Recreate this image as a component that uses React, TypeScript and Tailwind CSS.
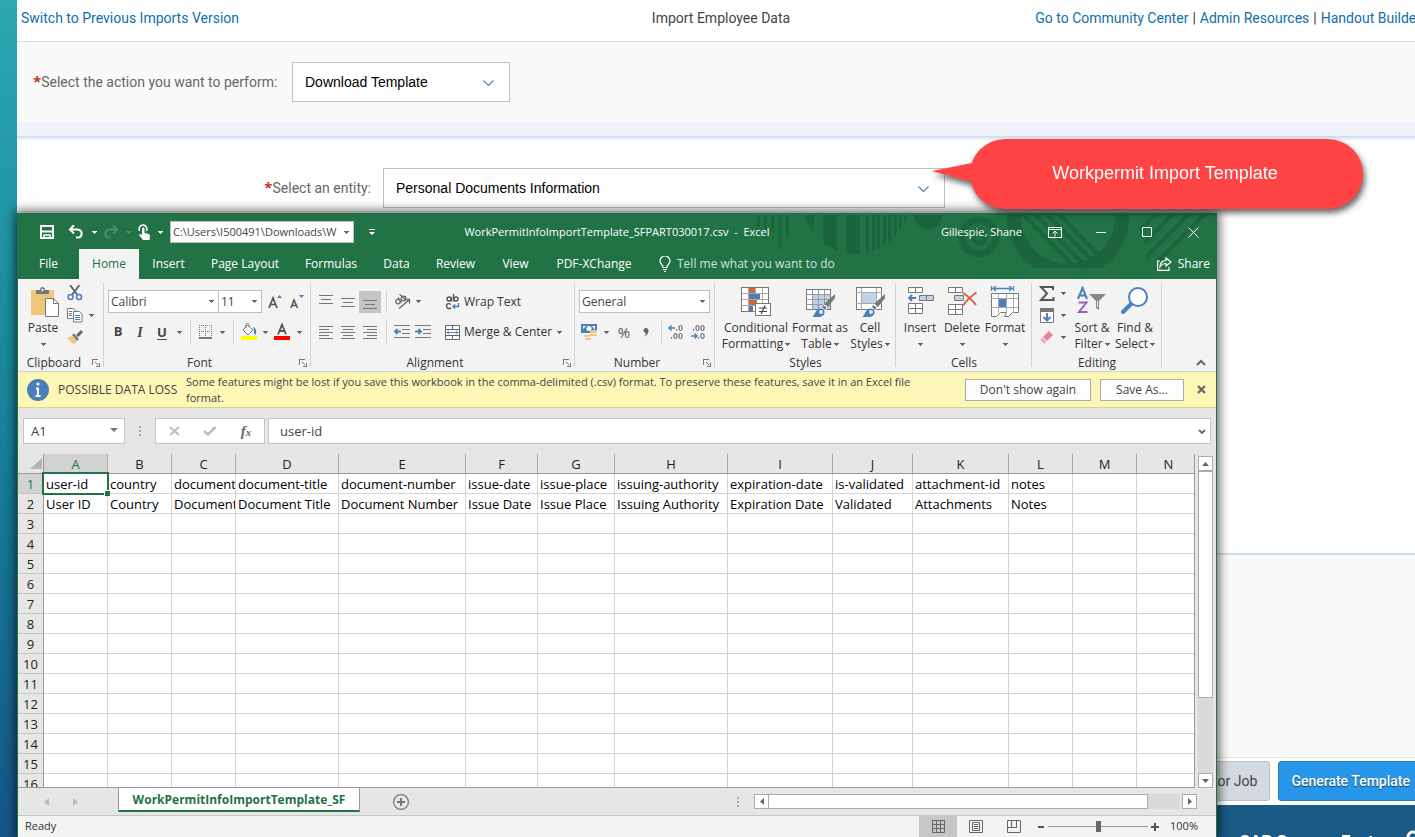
import { ReactNode, useState } from 'react'

type Column = { letter: string; width: string; name: string; label: string }

const COLUMNS: Column[] = [
  { letter: 'A', width: 'w-[64px]', name: 'user-id', label: 'User ID' },
  { letter: 'B', width: 'w-[64px]', name: 'country', label: 'Country' },
  { letter: 'C', width: 'w-[64px]', name: 'document-type', label: 'Document Type' },
  { letter: 'D', width: 'w-[103px]', name: 'document-title', label: 'Document Title' },
  { letter: 'E', width: 'w-[127px]', name: 'document-number', label: 'Document Number' },
  { letter: 'F', width: 'w-[72px]', name: 'issue-date', label: 'Issue Date' },
  { letter: 'G', width: 'w-[77px]', name: 'issue-place', label: 'Issue Place' },
  { letter: 'H', width: 'w-[113px]', name: 'issuing-authority', label: 'Issuing Authority' },
  { letter: 'I', width: 'w-[105px]', name: 'expiration-date', label: 'Expiration Date' },
  { letter: 'J', width: 'w-[80px]', name: 'is-validated', label: 'Validated' },
  { letter: 'K', width: 'w-[96px]', name: 'attachment-id', label: 'Attachments' },
  { letter: 'L', width: 'w-[64px]', name: 'notes', label: 'Notes' },
  { letter: 'M', width: 'w-[64px]', name: '', label: '' },
  { letter: 'N', width: 'w-[64px]', name: '', label: '' },
]

const ROWS = Array.from({ length: 16 }, (_, i) => i + 1)

const TABS = [
  { name: 'File', width: 'w-[61px]' },
  { name: 'Home', width: 'w-[60px]' },
  { name: 'Insert', width: 'w-[59px]' },
  { name: 'Page Layout', width: 'w-[94px]' },
  { name: 'Formulas', width: 'w-[78px]' },
  { name: 'Data', width: 'w-[53px]' },
  { name: 'Review', width: 'w-[65px]' },
  { name: 'View', width: 'w-[55px]' },
  { name: 'PDF-XChange', width: 'w-[102px]' },
]

/* ---------- small shared pieces ---------- */

function Caret({ className = 'text-[#666]' }: { className?: string }) {
  return (
    <svg width="5" height="3" viewBox="0 0 5 3" className={`shrink-0 ${className}`} shapeRendering="crispEdges">
      <path d="M0 0h5L2.500 3z" fill="currentColor" />
    </svg>
  )
}

function CaretButton({ label, className = 'text-[#666]' }: { label: string; className?: string }) {
  return (
    <button aria-label={label} className="flex h-[22px] w-3 items-center justify-center">
      <Caret className={className} />
    </button>
  )
}

function Tool({ label, className = 'w-[22px]', children }: { label: string; className?: string; children: ReactNode }) {
  return (
    <button aria-label={label} className={`flex h-[22px] shrink-0 items-center justify-center ${className}`}>
      {children}
    </button>
  )
}

function Rule() {
  return <div className="mx-[5px] h-[22px] w-px shrink-0 bg-[#d2d2d2]" />
}

function Combo({ label, value, className }: { label: string; value: string; className: string }) {
  return (
    <div className={`relative shrink-0 border border-[#c0c0c0] bg-white ${className}`}>
      <select aria-label={label} className="h-full w-full appearance-none overflow-hidden bg-transparent pr-3 pl-[2px] text-[#444] outline-none">
        <option>{value}</option>
      </select>
      <div className="pointer-events-none absolute inset-y-0 right-1 flex items-center">
        <Caret />
      </div>
    </div>
  )
}

function Group({ name, launcher = false, className, children }: { name: string; launcher?: boolean; className: string; children: ReactNode }) {
  return (
    <div className={`relative flex shrink-0 flex-col justify-between ${className}`}>
      <div className="flex h-[75px]">{children}</div>
      <div className="text-center text-[12px] leading-4 text-[#333]">{name}</div>
      {launcher && (
        <button aria-label={`${name} settings`} className="absolute right-1 bottom-1">
          <svg width="8" height="8" viewBox="0 0 8 8" fill="none" stroke="#777" shapeRendering="crispEdges">
            <path d="M.5 6V.5H6M3 3l3.500 3.500M7.500 4v3.500H4" />
          </svg>
        </button>
      )}
      <div className="absolute top-1 right-0 bottom-1 w-px bg-[#d2d2d2]" />
    </div>
  )
}

function BigButton({ icon, lines, className }: { icon: ReactNode; lines: string[]; className: string }) {
  return (
    <button className={`flex shrink-0 flex-col items-center pt-[7px] text-[12px] leading-4 whitespace-nowrap text-[#333] ${className}`}>
      {icon}
      <span className="mt-[2px]">{lines[0]}</span>
      <span className="flex h-4 items-center gap-[2px]">
        {lines[1]}
        <Caret />
      </span>
    </button>
  )
}

/* ---------- icons ---------- */

function PasteIcon() {
  return (
    <svg width="32" height="32" viewBox="0 0 32 32">
      <path d="M4 4h23v25H4z" fill="#edc77b" />
      <path d="M9 8V4h4c0-4 5-4 5 0h4v4z" fill="#777" />
      <circle cx="15.500" cy="4" r="1.200" fill="#f3f3f3" />
      <path d="M18.500 12.500h8l5 5v13h-13z" fill="#fff" stroke="#777" />
      <path d="M26.500 12.500v5h5" fill="none" stroke="#777" />
    </svg>
  )
}

function CutIcon() {
  return (
    <svg width="16" height="16" viewBox="0 0 16 16" fill="none">
      <path d="M3 0l7.500 10M12.500 0L5 10" stroke="#666" strokeWidth="2" />
      <circle cx="3.500" cy="12" r="2.500" stroke="#4a7fbb" strokeWidth="1.500" />
      <circle cx="12" cy="12" r="2.500" stroke="#4a7fbb" strokeWidth="1.500" />
    </svg>
  )
}

function CopyIcon() {
  return (
    <svg width="16" height="15" viewBox="0 0 16 15" fill="#fff" stroke="#777">
      <path d="M.5.5h6l2 2v8h-8z" />
      <path d="M2 3.500h3M2 5.500h3M2 7.500h3" stroke="#4a7fbb" />
      <path d="M6.500 3.500h6l2.500 2.500v8H6.500z" />
      <path d="M8 7.500h5M8 9.500h5M8 11.500h5" stroke="#4a7fbb" />
    </svg>
  )
}

function PainterIcon() {
  return (
    <svg width="16" height="15" viewBox="0 0 16 15">
      <path d="M0 8l5-2 5 5-3 4z" fill="#edc77b" />
      <path d="M5 5l2-1.500L12 9l-2 2z" fill="#777" />
      <path d="M9 5l5-5 2 2-4.500 5z" fill="#666" />
    </svg>
  )
}

function HLines({ rows }: { rows: [number, number, number][] }) {
  return (
    <svg width="14" height="14" viewBox="0 0 14 14" stroke="#777" shapeRendering="crispEdges">
      {rows.map(([x1, x2, y]) => (
        <path key={y} d={`M${x1} ${y + 0.5}H${x2}`} />
      ))}
    </svg>
  )
}

function IndentIcon({ out = false }: { out?: boolean }) {
  return (
    <svg width="16" height="14" viewBox="0 0 16 14" fill="none">
      <path d="M0 .5h16M8 4.500h8M8 8.500h8M0 12.500h16" stroke="#777" shapeRendering="crispEdges" />
      {out ? <path d="M7 6.500H1M3.500 4L1 6.500 3.500 9" stroke="#4a7fbb" strokeWidth="1.800" /> : <path d="M0 6.500h6M3.500 4L6 6.500 3.500 9" stroke="#4a7fbb" strokeWidth="1.800" />}
    </svg>
  )
}

function ConditionalIcon() {
  return (
    <svg width="32" height="32" viewBox="0 0 32 32">
      <rect x="1.500" y="1.500" width="27" height="24" fill="#fff" stroke="#777" />
      <path d="M8.500 2v23M15.500 2v23M22.500 2v23M2 7.500h26M2 13.500h26M2 19.500h26" stroke="#aaa" />
      <path d="M9 2h6v5H9zM9 14h8v5H9z" fill="#d9603b" />
      <path d="M9 8h11v5H9zM9 20h4v5H9z" fill="#4a7fbb" />
      <rect x="15.500" y="17.500" width="15" height="12" fill="#fff" stroke="#777" />
      <path d="M19 22h8M19 25.500h8M25 19.500l-4 8.500" stroke="#444" strokeWidth="1.200" />
    </svg>
  )
}

function Brush() {
  return (
    <>
      <path d="M31 8v4l-7 9-3.500-3.500z" fill="#777" />
      <path d="M19.500 18.500l3.500 3.500-2 2.500-3.500-3.500z" fill="#777" stroke="#f3f3f3" />
      <path d="M8 31c3-1 3-8 8-8.500 5 0 6 5 2.500 7.500-2.500 1.500-7 1-10.500 1z" fill="#4a7fbb" />
      <circle cx="17" cy="26" r="2" fill="#dce8f4" />
    </>
  )
}

function FormatTableIcon() {
  return (
    <svg width="32" height="32" viewBox="0 0 32 32">
      <rect x="2.500" y="3.500" width="24" height="20" fill="#fff" stroke="#777" />
      <path d="M9 9h17v14H9z" fill="#bdd3ea" />
      <path d="M8.500 4v20M14.500 4v20M20.500 4v20M2 8.500h25M2 13.500h25M2 18.500h25" stroke="#999" />
      <Brush />
    </svg>
  )
}

function CellStylesIcon() {
  return (
    <svg width="32" height="32" viewBox="0 0 32 32">
      <rect x="2.500" y="1.500" width="25" height="22" fill="#fff" stroke="#777" />
      <path d="M7.500 2v22M22.500 2v22M2 6.500h26M2 17.500h26" stroke="#aaa" />
      <path d="M8 7h14v10H8z" fill="#bdd3ea" />
      <Brush />
    </svg>
  )
}

function InsertCellsIcon() {
  return (
    <svg width="32" height="32" viewBox="0 0 32 32" fill="#fff" stroke="#777">
      <path d="M4.500 1.500h14v5h-14zM11.500 1.500v5M4.500 17.500h14v10h-14zM11.500 17.500v10M4.500 22.500h14" />
      <path d="M15.500 9.500h14v5h-14zM22.500 9.500v5" fill="#bdd3ea" />
      <path d="M12 12H5M8 9l-3 3 3 3" fill="none" stroke="#4a7fbb" strokeWidth="1.800" />
    </svg>
  )
}

function DeleteCellsIcon() {
  return (
    <svg width="32" height="32" viewBox="0 0 32 32" fill="#fff" stroke="#777">
      <path d="M2.500 1.500h14v5h-14zM9.500 1.500v5M2.500 18.500h14v10h-14zM9.500 18.500v10M2.500 23.500h14" />
      <path d="M8.500 9.500h9v5h-9z" fill="#bdd3ea" />
      <path d="M17 7c5 3 9 7 13 12M30.500 6.500C25 10 21 14 17 19.500" fill="none" stroke="#d9603b" strokeWidth="2" />
    </svg>
  )
}

function FormatCellsIcon() {
  return (
    <svg width="32" height="32" viewBox="0 0 32 32">
      <path d="M2.500 0v5M24.500 0v5M4 2.500h19M7 0L4 2.500 7 5M20 0l3 2.500L20 5" fill="none" stroke="#4a7fbb" strokeWidth="1.300" />
      <path d="M2.500 7.500h27v19h-6l-4 4h-4l2-4h-6l-4 4h-5z" fill="#fff" stroke="#777" />
      <path d="M9.500 8v19M17.500 8v19M24.500 8v19M2 12.500h27M2 21.500h27" stroke="#aaa" />
      <path d="M10 13h7v8h-7z" fill="#4a7fbb" />
    </svg>
  )
}

function SortFilterIcon() {
  return (
    <svg width="32" height="32" viewBox="0 0 32 32" fill="none">
      <path d="M2 13L6.500 2 11 13M3.500 9.500h6" stroke="#4a7fbb" strokeWidth="2" />
      <path d="M2.500 16.500h8L3 26h8.500" stroke="#9a62b8" strokeWidth="2" />
      <path d="M13 8h17l-7 7v9l-3-2v-7z" fill="#888" />
      <path d="M21.500 15v6" stroke="#eee" />
    </svg>
  )
}

function FindIcon() {
  return (
    <svg width="32" height="32" viewBox="0 0 32 32" fill="none">
      <path d="M12 18l-8 8" stroke="#4a7fbb" strokeWidth="4" strokeLinecap="round" />
      <circle cx="19" cy="11" r="9" fill="#fff" stroke="#4a7fbb" strokeWidth="2" />
    </svg>
  )
}

function ColorIcon({ color, children }: { color: string; children: ReactNode }) {
  return (
    <svg width="17" height="18" viewBox="0 0 17 18" fill="none">
      {children}
      <path d="M0 13h16v4H0z" fill={color} />
    </svg>
  )
}

function DecimalIcon({ increase = false }: { increase?: boolean }) {
  return (
    <svg width="16" height="16" viewBox="0 0 16 16" fill="none" stroke="#555">
      {increase ? (
        <>
          <path d="M7 4H1M3.500 1.500L1 4l2.500 2.500" stroke="#4a7fbb" strokeWidth="1.500" />
          <path d="M8.500 5v1.500M3.500 13v1.500" />
          <rect x="11" y="1.500" width="3" height="5" rx="1.500" />
          <rect x="6" y="9.500" width="3" height="5" rx="1.500" />
          <rect x="11" y="9.500" width="3" height="5" rx="1.500" />
        </>
      ) : (
        <>
          <path d="M1 12h6M4.500 9.500L7 12l-2.500 2.500" stroke="#4a7fbb" strokeWidth="1.500" />
          <path d="M3.500 5v1.500M8.500 13v1.500" />
          <rect x="6" y="1.500" width="3" height="5" rx="1.500" />
          <rect x="11" y="1.500" width="3" height="5" rx="1.500" />
          <rect x="11" y="9.500" width="3" height="5" rx="1.500" />
        </>
      )}
    </svg>
  )
}

// circuit-like artwork behind the title bar
function TitleArt() {
  return (
    <svg width="460" height="54" viewBox="0 0 460 54" className="pointer-events-none absolute top-px right-0" fill="none">
      <defs>
        <clipPath id="disc">
          <circle cx="100" cy="-14" r="53" />
        </clipPath>
        <clipPath id="ringBox">
          <rect x="240" y="0" width="140" height="53" />
        </clipPath>
        <clipPath id="ringInner">
          <circle cx="312" cy="2" r="52" />
        </clipPath>
      </defs>
      <g fill="#1c643c">
        <path d="M1 0h3v12H1zM8 0h3v24H8zM15 0h3v17h-3zM22 0h4v34h-4zM30 0h3v22h-3z" />
        <g clipPath="url(#disc)">
          <path d="M49 0h9v40h-9zM67 0h14v40H67zM90 0h14v40H90zM110 0h3v40h-3zM116 0h3v40h-3zM121 0h3v40h-3zM127 0h3v40h-3zM132 0h3v40h-3zM138 0h3v40h-3zM143 0h3v40h-3zM148 0h3v40h-3z" />
        </g>
        <circle cx="172" cy="0" r="14" />
      </g>
      <g stroke="#1c643c">
        <circle cx="223" cy="22" r="17" strokeWidth="7" />
        <circle cx="223" cy="22" r="6" strokeWidth="5" />
        <g clipPath="url(#ringBox)">
          <circle cx="312" cy="2" r="54" strokeWidth="14" />
          <g clipPath="url(#ringInner)">
            <path d="M262-6l60 62M274-6l60 62M286-6l58 60M298-6l54 56" strokeWidth="4" />
          </g>
        </g>
        <path d="M401-2l-16 16M418-2l-30 30M434-2l-44 44M450-2l-48 48" strokeWidth="4" />
      </g>
    </svg>
  )
}

/* ---------- spreadsheet window ---------- */

function TitleBar() {
  return (
    <div className="relative flex h-[35px] items-center pt-px text-[11px] text-white">
      <div className="flex w-[354px] shrink-0 items-center pl-5">
        <Tool label="Save" className="w-[18px]">
          <svg width="14" height="14" viewBox="0 0 14 14" fill="none" stroke="#fff" strokeWidth="2">
            <path d="M1 1h12v12H1zM2 6.500h10" />
            <path d="M4 13v-3h6v3" strokeWidth="1.500" />
          </svg>
        </Tool>
        <Tool label="Undo" className="ml-2 w-6">
          <svg width="16" height="14" viewBox="0 0 16 14" fill="none" stroke="#fff" strokeWidth="2">
            <path d="M6 0L2 4.500l4 4M2 4.500h7c6 0 6 8 1 8H8" />
          </svg>
        </Tool>
        <CaretButton label="Undo history" className="text-white" />
        <Tool label="Redo" className="w-[22px]">
          <svg width="16" height="14" viewBox="0 0 16 14" fill="none" stroke="#4c8f6a" strokeWidth="2">
            <path d="M10 0l4 4.500-4 4M14 4.500H7c-6 0-6 8-1 8h1" />
          </svg>
        </Tool>
        <CaretButton label="Redo history" className="text-[#4c8f6a]" />
        <Tool label="Touch mode" className="w-5">
          <svg width="14" height="17" viewBox="0 0 14 17">
            <path d="M2.500 7a4 4 0 117 0" fill="none" stroke="#fff" strokeWidth="1.500" />
            <path d="M5 4.500c0-1.500 2.500-1.500 2.500 0V9l4 1c1 .3 1.500 1 1.500 2l-.5 4H6l-4-5 1-1 2 1z" fill="#fff" />
          </svg>
        </Tool>
        <CaretButton label="Touch options" className="text-white" />
        <Combo label="File path" value="C:\Users\I500491\Downloads\W" className="ml-1 h-[22px] w-[184px]" />
      </div>
      <Tool label="Customize toolbar" className="-ml-[9px] w-[18px]">
        <svg width="6" height="7" viewBox="0 0 6 7" fill="#fff">
          <path d="M0 0h6v1H0zM0 3h6L3 6z" />
        </svg>
      </Tool>
      <div className="min-w-0 flex-1 truncate text-center">WorkPermitInfoImportTemplate_SFPART030017.csv&nbsp; -&nbsp; Excel</div>
      <div className="ml-[88px] w-[91px] shrink-0">Gillespie, Shane</div>
      <div className="flex shrink-0">
        <Tool label="Ribbon display options" className="w-[46px]">
          <svg width="14" height="11" viewBox="0 0 14 11" fill="none" stroke="#fff">
            <path d="M.5.500h13v10H.500zM0 2.500h14M7 9.500v-5M4.500 6.500L7 4l2.500 2.500" />
          </svg>
        </Tool>
        <Tool label="Minimize" className="w-[46px]">
          <svg width="10" height="10" stroke="#fff">
            <path d="M0 5.500h10" />
          </svg>
        </Tool>
        <Tool label="Maximize" className="w-[46px]">
          <svg width="10" height="10" fill="none" stroke="#fff">
            <path d="M.5.500h9v9h-9z" />
          </svg>
        </Tool>
        <Tool label="Close window" className="w-[46px]">
          <svg width="11" height="11" fill="none" stroke="#fff">
            <path d="M.5.500l10 10M10.500.500l-10 10" />
          </svg>
        </Tool>
      </div>
    </div>
  )
}

function TabStrip() {
  return (
    <div className="relative flex h-[30px] items-stretch text-[12px] text-white">
      {TABS.map((tab) => (
        <button
          key={tab.name}
          className={`shrink-0 whitespace-nowrap ${tab.width} ${tab.name === 'Home' ? 'bg-[#f3f3f3] text-[#217346]' : ''}`}
        >
          {tab.name}
        </button>
      ))}
      <button className="ml-[14px] flex items-center gap-[6px] whitespace-nowrap text-[#cfe3d7]">
        <svg width="12" height="16" viewBox="0 0 12 16" fill="none" stroke="#fff" strokeWidth="1.200">
          <path d="M4 11.500c0-3-3-3.500-3-6.500a5 5 0 0110 0c0 3-3 3.500-3 6.500zM4 13.500h4M5 15.500h2" />
        </svg>
        Tell me what you want to do
      </button>
      <button className="mr-[6px] ml-auto flex items-center gap-[6px]">
        <svg width="15" height="14" viewBox="0 0 15 14" fill="none" stroke="#fff" strokeWidth="1.200">
          <path d="M3 4H.6v9.400H12V10M9 1l5 4-5 4V6.500c-3 0-4.500 1-6 3.500 0-4 2-6.500 6-6.500z" />
        </svg>
        Share
      </button>
    </div>
  )
}

function Ribbon() {
  return (
    <div className="flex h-[93px] border-b border-[#d2d2d2] bg-[#f3f3f3] text-[12px]">
      <Group name="Clipboard" launcher className="w-[86px] pr-[14px]">
        <BigButton className="ml-[2px] w-[46px]" icon={<PasteIcon />} lines={['Paste', '']} />
        <div className="-ml-px flex flex-col pt-[3px]">
          <Tool label="Cut" className="w-5">
            <CutIcon />
          </Tool>
          <div className="flex">
            <Tool label="Copy" className="w-5">
              <CopyIcon />
            </Tool>
            <CaretButton label="Copy options" />
          </div>
          <Tool label="Format painter" className="w-5">
            <PainterIcon />
          </Tool>
        </div>
      </Group>

      <Group name="Font" launcher className="w-[207px] pr-4">
        <div className="flex flex-col gap-2 pt-[11px] pl-1">
          <div className="flex items-center">
            <Combo label="Font name" value="Calibri" className="h-[23px] w-[111px]" />
            <Combo label="Font size" value="11" className="-ml-px h-[23px] w-[44px]" />
            <Tool label="Increase font size" className="ml-[2px] w-[22px]">
              <svg width="14" height="14" viewBox="0 0 14 14" fill="none">
                <path d="M1 13L5 3l4 10M2.500 9.500h5" stroke="#555" strokeWidth="1.700" />
                <path d="M9 3l2.500-3L14 3z" fill="#4a7fbb" />
              </svg>
            </Tool>
            <Tool label="Decrease font size">
              <svg width="14" height="14" viewBox="0 0 14 14" fill="none">
                <path d="M1 13l3-8 3.500 8M2.500 10.500h4" stroke="#555" strokeWidth="1.500" />
                <path d="M9 0h5l-2.500 3z" fill="#4a7fbb" />
              </svg>
            </Tool>
          </div>
          <div className="-ml-px flex items-center text-[13px] text-[#444]">
            <Tool label="Bold">
              <b>B</b>
            </Tool>
            <Tool label="Italic">
              <i className="font-['Liberation_Serif'] text-[14px] font-bold">I</i>
            </Tool>
            <Tool label="Underline">
              <span className="border-b border-[#444] leading-[14px] font-bold">U</span>
            </Tool>
            <CaretButton label="Underline style" />
            <Rule />
            <Tool label="Borders" className="w-5">
              <svg width="14" height="14" viewBox="0 0 14 14" stroke="#777" fill="none">
                <path d="M.5 0v13M6.500 0v13M12.500 0v13M0 .5h13M0 6.500h13" strokeDasharray="1 1" />
                <path d="M0 13h13" stroke="#555" strokeWidth="1.500" />
              </svg>
            </Tool>
            <CaretButton label="Border styles" />
            <Rule />
            <Tool label="Fill color" className="w-5">
              <ColorIcon color="#ffff00">
                <path d="M6 2l6 5-5 5-5-5zM5 5V1.500c0-1.500 3-1.500 3 0V4" fill="#fff" stroke="#777" />
                <path d="M12 4c3 1 4 4 2.500 8-1.500-1-2-3-1.500-5z" fill="#4a7fbb" />
              </ColorIcon>
            </Tool>
            <CaretButton label="Fill colors" />
            <Tool label="Font color" className="w-[22px]">
              <ColorIcon color="#ff0000">
                <path d="M4 11.500L8 1.500l4 10M5.500 8h5" stroke="#555" strokeWidth="1.800" />
              </ColorIcon>
            </Tool>
            <CaretButton label="Font colors" />
          </div>
        </div>
      </Group>

      <Group name="Alignment" launcher className="w-[264px] pr-4">
        <div className="flex flex-col gap-2 pt-[11px] pl-1">
          <div className="flex h-[23px] items-center">
            <Tool label="Top align">
              <HLines rows={[[0, 14, 0], [2, 12, 4], [0, 14, 8]]} />
            </Tool>
            <Tool label="Middle align">
              <HLines rows={[[0, 14, 3], [2, 12, 7], [0, 14, 11]]} />
            </Tool>
            <Tool label="Bottom align" className="w-[22px] bg-[#c5c5c5]">
              <HLines rows={[[0, 14, 5], [2, 12, 9], [0, 14, 13]]} />
            </Tool>
            <Rule />
            <Tool label="Orientation" className="w-5">
              <svg width="17" height="16" viewBox="0 0 17 16" fill="none" stroke="#666" strokeWidth="1.300">
                <circle cx="4" cy="7.500" r="2.300" />
                <circle cx="9.500" cy="4.500" r="2.300" />
                <path d="M4 3.500l3.500 5M5.500 0L12 6M5 14.500L15 6M15.500 9.500V5.500h-4" />
              </svg>
            </Tool>
            <CaretButton label="Orientation options" />
          </div>
          <div className="flex items-center">
            <Tool label="Align left">
              <HLines rows={[[0, 14, 1], [0, 10, 4], [0, 14, 7], [0, 10, 10], [0, 14, 13]]} />
            </Tool>
            <Tool label="Center">
              <HLines rows={[[0, 14, 1], [2, 12, 4], [0, 14, 7], [2, 12, 10], [0, 14, 13]]} />
            </Tool>
            <Tool label="Align right">
              <HLines rows={[[0, 14, 1], [4, 14, 4], [0, 14, 7], [4, 14, 10], [0, 14, 13]]} />
            </Tool>
            <div className="mr-1 ml-[5px] h-[22px] w-px bg-[#d2d2d2]" />
            <Tool label="Decrease indent" className="w-[21px]">
              <IndentIcon out />
            </Tool>
            <Tool label="Increase indent">
              <IndentIcon />
            </Tool>
          </div>
        </div>
        <div className="mt-[10px] ml-[3px] h-[54px] w-px bg-[#d2d2d2]" />
        <div className="flex flex-col gap-2 pt-[11px] pl-2 text-[#333]">
          <button className="flex h-[23px] items-center gap-1 whitespace-nowrap">
            <svg width="15" height="16" viewBox="0 0 15 16" fill="none" stroke="#555" strokeWidth="1.400">
              <circle cx="4" cy="5" r="2" />
              <path d="M6.300 3v4.500M8.500 0v7.500M6 10.500c-3-2-4.500 0-4.500 1.500s1.500 3.500 4.500 2" />
              <circle cx="11" cy="5" r="2" />
              <path d="M13.500 9v3.500H8M10 10.500l-2 2 2 2" stroke="#4a7fbb" />
            </svg>
            Wrap Text
          </button>
          <div className="flex items-center">
            <button className="flex h-[22px] w-[108px] items-center gap-1 whitespace-nowrap">
              <svg width="15" height="15" viewBox="0 0 15 15" fill="#fff" stroke="#666" className="shrink-0">
                <path d="M.5.500h14v14H.500zM0 4.500h15M0 10.500h15M7.500 0v4M7.500 11v4" />
                <path d="M2 7.500h11M4 5.500l-2 2 2 2M11 5.500l2 2-2 2" fill="none" stroke="#4a7fbb" />
              </svg>
              Merge &amp; Center
            </button>
            <CaretButton label="Merge options" />
          </div>
        </div>
      </Group>

      <Group name="Number" launcher className="w-[140px] pr-4">
        <div className="flex flex-col gap-2 pt-[11px] pl-1">
          <Combo label="Number format" value="General" className="h-[23px] w-[131px]" />
          <div className="-ml-px flex items-center text-[#555]">
            <Tool label="Accounting format">
              <svg width="17" height="16" viewBox="0 0 17 16">
                <path d="M0 0h16v9H0z" fill="#4a7fbb" />
                <path d="M2 2h3L2 5zM14 2v4l-3-4z" fill="#fff" />
                <circle cx="8" cy="4.500" r="2.500" fill="#fff" />
                <path d="M9 6h7v3H9zM9 10h7v2H9zM3 11h6v2H3zM4 14h6v2H4z" fill="#edc77b" />
              </svg>
            </Tool>
            <CaretButton label="Accounting formats" />
            <Tool label="Percent style" className="w-6">
              <span className="text-[15px]">%</span>
            </Tool>
            <Tool label="Comma style" className="w-5">
              <svg width="6" height="9" viewBox="0 0 6 9">
                <path d="M.5 2.500a2.500 2.500 0 015 0c0 3-1.500 5-4.500 6C2.500 7 3 6 3 5 1.500 5 .5 4 .5 2.500z" fill="#666" />
              </svg>
            </Tool>
            <div className="mr-[3px] ml-[5px] h-[22px] w-px bg-[#d2d2d2]" />
            <Tool label="Increase decimal">
              <DecimalIcon increase />
            </Tool>
            <Tool label="Decrease decimal">
              <DecimalIcon />
            </Tool>
          </div>
        </div>
      </Group>

      <Group name="Styles" className="w-[181px]">
        <BigButton className="ml-1 w-[74px]" icon={<ConditionalIcon />} lines={['Conditional', 'Formatting']} />
        <BigButton className="w-[54px]" icon={<FormatTableIcon />} lines={['Format as', 'Table']} />
        <BigButton className="w-[46px]" icon={<CellStylesIcon />} lines={['Cell', 'Styles']} />
      </Group>

      <Group name="Cells" className="w-[136px]">
        <BigButton className="ml-[3px] w-[42px]" icon={<InsertCellsIcon />} lines={['Insert', '']} />
        <BigButton className="w-[42px]" icon={<DeleteCellsIcon />} lines={['Delete', '']} />
        <BigButton className="w-[44px]" icon={<FormatCellsIcon />} lines={['Format', '']} />
      </Group>

      <Group name="Editing" className="w-[130px]">
        <div className="flex w-[38px] flex-col pt-[3px] pl-[5px]">
          <div className="flex">
            <Tool label="AutoSum" className="w-5">
              <svg width="16" height="15" viewBox="0 0 16 15" fill="none" stroke="#555" strokeWidth="2">
                <path d="M14 4V1H2l6 6.500L2 14h12.500v-3" />
              </svg>
            </Tool>
            <CaretButton label="AutoSum options" />
          </div>
          <div className="flex">
            <Tool label="Fill" className="w-5">
              <svg width="14" height="15" viewBox="0 0 14 15" fill="#fff" stroke="#777">
                <path d="M.5.500h13v14H.500z" />
                <path d="M0 0h14v4H0z" fill="#777" stroke="none" />
                <path d="M7 5v7.500M3.500 9L7 12.500 10.500 9" fill="none" stroke="#4a7fbb" strokeWidth="2" />
              </svg>
            </Tool>
            <CaretButton label="Fill options" />
          </div>
          <div className="flex">
            <Tool label="Clear" className="w-5">
              <svg width="14" height="13" viewBox="0 0 14 13">
                <path d="M3 6l6-6 4 4-6 6z" fill="#e88398" />
                <path d="M2.300 6.700l4 4-2 2-4-4z" fill="#f0a5b4" />
              </svg>
            </Tool>
            <CaretButton label="Clear options" />
          </div>
        </div>
        <BigButton className="w-[44px]" icon={<SortFilterIcon />} lines={['Sort &', 'Filter']} />
        <BigButton className="w-[42px]" icon={<FindIcon />} lines={['Find &', 'Select']} />
      </Group>

      <button aria-label="Collapse ribbon" className="mt-auto mr-[10px] mb-1 ml-auto">
        <svg width="10" height="8" viewBox="0 0 10 8" fill="none" stroke="#666" strokeWidth="2">
          <path d="M1 6l4-4 4 4" />
        </svg>
      </button>
    </div>
  )
}

function WarningBar() {
  return (
    <div className="flex h-9 shrink-0 items-center border-b border-[#d9d48a] bg-[#fcf7b6] text-[12px] leading-4 text-[#444]">
      <svg width="22" height="22" viewBox="0 0 22 22" className="ml-[9px] shrink-0">
        <circle cx="11" cy="11" r="11" fill="#4a7fb8" />
        <path d="M11 9v8M9 9.500h3M8.500 17h5" stroke="#fff" strokeWidth="2" />
        <circle cx="11" cy="5" r="1.600" fill="#fff" />
      </svg>
      <span className="ml-[9px] w-[128px] shrink-0 whitespace-nowrap">POSSIBLE DATA LOSS</span>
      <p className="w-[750px] text-[11px] leading-4">
        Some features might be lost if you save this workbook in the comma-delimited (.csv) format. To preserve these features, save it in an Excel file format.
      </p>
      <button className="ml-auto h-[22px] w-[126px] shrink-0 border border-[#ababab] bg-[#fdfdfd]">Don't show again</button>
      <button className="ml-[9px] h-[22px] w-[84px] shrink-0 border border-[#ababab] bg-[#fdfdfd]">Save As...</button>
      <button aria-label="Dismiss" className="mr-[10px] ml-[13px] shrink-0">
        <svg width="9" height="9" stroke="#666" strokeWidth="2.200">
          <path d="M1 1l7 7M8 1L1 8" />
        </svg>
      </button>
    </div>
  )
}

function FormulaBar() {
  return (
    <div className="flex h-[46px] shrink-0 items-center bg-[#e6e6e6] px-[5px]">
      <div className="relative h-[26px] w-[102px] shrink-0 border border-[#c6c6c6] bg-white">
        <input aria-label="Name box" defaultValue="A1" className="h-full w-full pl-[7px] text-[13px] text-[#444] outline-none" />
        <svg width="8" height="4" viewBox="0 0 8 4" className="absolute top-[9px] right-[6px]">
          <path d="M0 0h8L4 4z" fill="#777" />
        </svg>
      </div>
      <div className="flex w-[30px] shrink-0 justify-center">
        <Dots />
      </div>
      <div className="flex h-[26px] w-[110px] shrink-0 items-center border border-[#c6c6c6] bg-white">
        <Tool label="Cancel" className="w-9">
          <svg width="11" height="10" stroke="#bbb" strokeWidth="2">
            <path d="M1 1l9 8M10 1L1 9" />
          </svg>
        </Tool>
        <Tool label="Enter" className="w-9">
          <svg width="14" height="10" fill="none" stroke="#bbb" strokeWidth="2.500">
            <path d="M1 5l4 3.500L12.500 1" />
          </svg>
        </Tool>
        <Tool label="Insert function" className="w-9">
          <i className="font-['Liberation_Serif'] text-[15px] leading-none font-bold text-[#666]">
            f<span className="text-[11px]">x</span>
          </i>
        </Tool>
      </div>
      <div className="relative ml-[3px] h-[26px] flex-1 border border-[#c6c6c6] bg-white">
        <input aria-label="Formula" defaultValue="user-id" className="h-full w-full pl-[11px] text-[13px] text-[#444] outline-none" />
        <svg width="8" height="6" fill="none" stroke="#666" strokeWidth="1.800" className="absolute top-[10px] right-1">
          <path d="M1 1l3 3 3-3" />
        </svg>
      </div>
    </div>
  )
}

function Dots() {
  return (
    <svg width="2" height="10" viewBox="0 0 2 10" fill="#aaa">
      <path d="M0 0h2v2H0zM0 4h2v2H0zM0 8h2v2H0z" />
    </svg>
  )
}

function Sheet() {
  return (
    <div className="flex min-h-0 flex-1 bg-[#e6e6e6]">
      <div className="min-w-0 flex-1 overflow-hidden border-r border-b border-[#999]">
        <table className="w-[1182px] table-fixed border-separate border-spacing-0 bg-white text-[13px] leading-[18px] text-black">
          <thead>
            <tr className="h-5 bg-[#e6e6e6]">
              <th className="w-[26px] border-r border-b border-[#999] p-0">
                <svg width="12" height="11" viewBox="0 0 12 11" className="mr-px ml-auto">
                  <path d="M12 0v11H0z" fill="#b4b4b4" />
                </svg>
              </th>
              {COLUMNS.map((c) => (
                <th
                  key={c.letter}
                  className={`border-r border-b border-r-[#aaa] border-b-[#999] p-0 text-center font-normal ${c.width} ${c.letter === 'A' ? 'bg-[#d2d2d2] text-[#217346]' : 'text-[#222]'}`}
                >
                  {c.letter}
                </th>
              ))}
            </tr>
          </thead>
          <tbody>
            {ROWS.map((n) => (
              <tr key={n} className="h-5">
                <th className={`border-r border-b border-r-[#999] border-b-[#c6c6c6] p-0 pt-px text-center font-normal ${n === 1 ? 'bg-[#d2d2d2] text-[#217346]' : 'bg-[#e6e6e6] text-[#222]'}`}>
                  {n}
                </th>
                {COLUMNS.map((c) => (
                  <td key={c.letter} className="relative border-r border-b border-[#d4d4d4] p-0 pt-px">
                    <div className="overflow-hidden pl-[2px] whitespace-nowrap">{n === 1 ? c.name : n === 2 ? c.label : ''}</div>
                    {n === 1 && c.letter === 'A' && (
                      <div className="absolute -inset-[2px] z-10 border-2 border-[#217346]">
                        <div className="absolute -right-[3px] -bottom-[3px] h-[6px] w-[6px] border-t border-l border-white bg-[#217346]" />
                      </div>
                    )}
                  </td>
                ))}
              </tr>
            ))}
          </tbody>
        </table>
      </div>
      <div className="flex w-[21px] shrink-0 flex-col px-[3px] pt-[2px]">
        <button aria-label="Scroll up" className="flex h-[15px] items-center justify-center border border-[#ababab] bg-white">
          <svg width="7" height="4">
            <path d="M0 4l3.500-4L7 4z" fill="#666" />
          </svg>
        </button>
        <div className="flex-1 bg-[#dadada]">
          <div className="h-[75%] border border-[#ababab] bg-white" />
        </div>
        <button aria-label="Scroll down" className="flex h-[15px] items-center justify-center border border-[#ababab] bg-white">
          <svg width="7" height="4">
            <path d="M0 0h7L3.500 4z" fill="#666" />
          </svg>
        </button>
      </div>
    </div>
  )
}

function SheetTabs() {
  return (
    <div className="flex h-[27px] shrink-0 items-center bg-[#e6e6e6]">
      <div className="flex w-[100px] shrink-0 items-center gap-6 pl-[26px]">
        <button aria-label="Previous sheet">
          <svg width="5" height="8">
            <path d="M5 0v8L0 4z" fill="#bbb" />
          </svg>
        </button>
        <button aria-label="Next sheet">
          <svg width="5" height="8">
            <path d="M0 0v8l5-4z" fill="#bbb" />
          </svg>
        </button>
      </div>
      <button className="mb-auto h-6 w-[242px] shrink-0 border-x border-b-2 border-x-[#999] border-b-[#217346] bg-white pt-px text-[12px] font-bold whitespace-nowrap text-[#217346]">
        WorkPermitInfoImportTemplate_SF
      </button>
      <button aria-label="New sheet" className="ml-[33px] shrink-0">
        <svg width="16" height="16" viewBox="0 0 16 16" fill="none" stroke="#777">
          <circle cx="8" cy="8" r="7.400" strokeWidth="1.200" />
          <path d="M4 8h8M8 4v8" strokeWidth="2" />
        </svg>
      </button>
      <div className="ml-auto flex shrink-0 items-center">
        <Dots />
        <button aria-label="Scroll left" className="ml-[15px] flex h-[15px] w-[15px] items-center justify-center border border-[#ababab] bg-white">
          <svg width="4" height="7">
            <path d="M4 0v7L0 3.500z" fill="#666" />
          </svg>
        </button>
        <div className="-ml-px flex h-[15px] w-[412px] bg-[#dadada]">
          <div className="w-[380px] border border-[#ababab] bg-white" />
        </div>
        <button aria-label="Scroll right" className="mr-[19px] ml-[2px] flex h-[15px] w-[15px] items-center justify-center border border-[#ababab] bg-white">
          <svg width="4" height="7">
            <path d="M0 0v7l4-3.500z" fill="#666" />
          </svg>
        </button>
      </div>
    </div>
  )
}

function StatusBar() {
  const [zoom, setZoom] = useState(100)

  return (
    <div className="flex h-[22px] shrink-0 items-center border-t border-[#c6c6c6] bg-[#f3f3f3] text-[11px] text-[#333]">
      <span className="pl-[7px]">Ready</span>
      <div className="ml-auto flex h-full items-center">
        <button aria-label="Normal view" className="flex h-full w-[38px] items-center justify-center bg-[#c6c6c6]">
          <svg width="13" height="13" fill="none" stroke="#666">
            <path d="M.5.500h12v12H.500zM4.500 0v13M8.500 0v13M0 4.500h13M0 8.500h13" />
          </svg>
        </button>
        <button aria-label="Page layout view" className="flex h-full w-[38px] items-center justify-center">
          <svg width="14" height="13" fill="none" stroke="#666">
            <path d="M.5.500h13v12H.500zM3.500 2.500h7v8h-7zM5 4.500h4M5 6.500h4M5 8.500h4" />
          </svg>
        </button>
        <button aria-label="Page break view" className="flex h-full w-[38px] items-center justify-center">
          <svg width="14" height="13" fill="none" stroke="#666">
            <path d="M.5.500h13v12H.500zM4.500 0v7M9.500 0v7M0 7.500h10" />
          </svg>
        </button>
        <button aria-label="Zoom out" className="ml-px w-[14px]">
          <svg width="6" height="8" stroke="#555" strokeWidth="2" className="mx-auto">
            <path d="M0 4h6" />
          </svg>
        </button>
        <input
          type="range"
          aria-label="Zoom"
          min={0}
          max={200}
          value={zoom}
          onChange={(e) => setZoom(Number(e.target.value))}
          className="h-px w-[100px] appearance-none bg-[#999] [&::-webkit-slider-thumb]:h-[11px] [&::-webkit-slider-thumb]:w-[5px] [&::-webkit-slider-thumb]:appearance-none [&::-webkit-slider-thumb]:bg-[#666]"
        />
        <button aria-label="Zoom in" className="w-[14px]">
          <svg width="8" height="8" stroke="#555" strokeWidth="2" className="mx-auto">
            <path d="M0 4h8M4 0v8" />
          </svg>
        </button>
        <span className="mr-[18px] ml-2 w-7 text-right">{zoom}%</span>
      </div>
    </div>
  )
}

function SpreadsheetWindow() {
  return (
    <section className="absolute top-[213px] right-[198px] bottom-0 left-[17px] flex flex-col overflow-hidden border border-b-0 border-[#217346] font-['Open_Sans',sans-serif] shadow-[0_0_10px_2px_rgba(0,0,0,0.65)]">
      <div className="relative shrink-0 bg-[#217346]">
        <TitleArt />
        <TitleBar />
        <TabStrip />
      </div>
      <Ribbon />
      <WarningBar />
      <FormulaBar />
      <Sheet />
      <SheetTabs />
      <StatusBar />
    </section>
  )
}

/* ---------- import page ---------- */

function Required() {
  return <b className="font-['Open_Sans',sans-serif] text-[15px] leading-none text-[#c9302c]">*</b>
}

function FormSelect({ id, value, className }: { id: string; value: string; className: string }) {
  return (
    <div className={`relative h-10 border border-[#bfbfbf] bg-white ${className}`}>
      <select id={id} className="h-full w-full appearance-none bg-transparent pl-3 font-['Liberation_Sans',sans-serif] text-[14px] text-black outline-none">
        <option>{value}</option>
      </select>
      <svg width="11" height="6" viewBox="0 0 11 6" fill="none" stroke="#5c86a8" strokeWidth="1.200" className="pointer-events-none absolute top-[17px] right-[15px]">
        <path d="M.5.500l5 5 5-5" />
      </svg>
    </div>
  )
}

function Callout() {
  return (
    <div className="absolute top-[139px] left-[932px] pl-[38px] drop-shadow-[2px_4px_3px_rgba(0,0,0,0.6)]">
      <svg width="50" height="24" viewBox="0 0 50 24" className="absolute top-[22px] left-0">
        <path d="M0 10L50 0v24z" fill="#fe4445" />
      </svg>
      <div className="relative flex h-[70px] w-[393px] items-center justify-center rounded-full bg-[#fe4445] pr-[3px] pb-[2px] font-['Liberation_Sans',sans-serif] text-[18px] text-white">
        Workpermit Import Template
      </div>
    </div>
  )
}

export default function App() {
  return (
    <div className="relative flex h-screen min-h-[600px] overflow-hidden bg-linear-to-b from-[#2ba8b2] via-[#17849a] to-[#165587] pl-[17px] font-['Roboto',sans-serif] text-[14px]">
      <div className="-mr-[11px] flex min-w-0 flex-1 flex-col bg-white text-[#666]">
        <header className="grid h-[42px] shrink-0 grid-cols-[1fr_auto_1fr] items-center border-b border-[#d5dee6] pr-[5px] pb-1 pl-1 whitespace-nowrap">
          <a href="#previous" className="text-[#0f6fa8]">Switch to Previous Imports Version</a>
          <h1 className="text-[#444]">Import Employee Data</h1>
          <nav className="flex justify-end gap-1 text-[#0f6fa8]">
            <a href="#community">Go to Community Center</a>
            <span className="text-[#333]">|</span>
            <a href="#admin">Admin Resources</a>
            <span className="text-[#333]">|</span>
            <a href="#handout">Handout Builder</a>
          </nav>
        </header>

        <div className="flex h-20 shrink-0 items-center bg-[#fafafa] pl-4">
          <label htmlFor="action" className="w-[259px] whitespace-nowrap">
            <Required />
            Select the action you want to perform:
          </label>
          <FormSelect id="action" value="Download Template" className="w-[218px]" />
        </div>
        <div className="h-[18px] shrink-0 border-t-[14px] border-b-2 border-t-[#edf3f8] border-b-[#edf3f8] bg-[#d1e1f0]" />

        <div className="flex h-[413px] shrink-0 items-start pt-7">
          <label htmlFor="entity" className="w-[366px] pr-3 text-right leading-10">
            <Required />
            Select an entity:
          </label>
          <FormSelect id="entity" value="Personal Documents Information" className="w-[562px]" />
        </div>

        <div className="min-h-0 flex-1 border-t-2 border-b border-t-[#cbdcec] border-b-[#e5e5e5] bg-[#fafafa]" />
        <footer className="shrink-0">
          <div className="flex h-[47px] items-center justify-end gap-2 pr-[3px] pb-px">
            <button className="h-10 rounded-[3px] border border-[#b9c2c9] bg-[#d3d9df] px-3 text-[#444]">Monitor Job</button>
            <button className="h-10 rounded-[3px] border border-[#1f7fc4] bg-[#2796e8] px-3 font-medium text-white text-shadow-[0_1px_1px_rgba(0,0,0,0.6)]">Generate Template</button>
          </div>
          <div className="flex h-8 justify-end gap-2 overflow-hidden bg-[#1a5a86] pt-6 text-[17px] font-bold whitespace-nowrap text-white">
            SAP SuccessFactors
            <svg width="20" height="20" viewBox="0 0 20 20" fill="none" stroke="#fff" strokeWidth="3" className="shrink-0">
              <path d="M10 19L3 11a5 5 0 017-7 5 5 0 017 7z" />
            </svg>
          </div>
        </footer>
      </div>

      <SpreadsheetWindow />
      <Callout />
    </div>
  )
}
